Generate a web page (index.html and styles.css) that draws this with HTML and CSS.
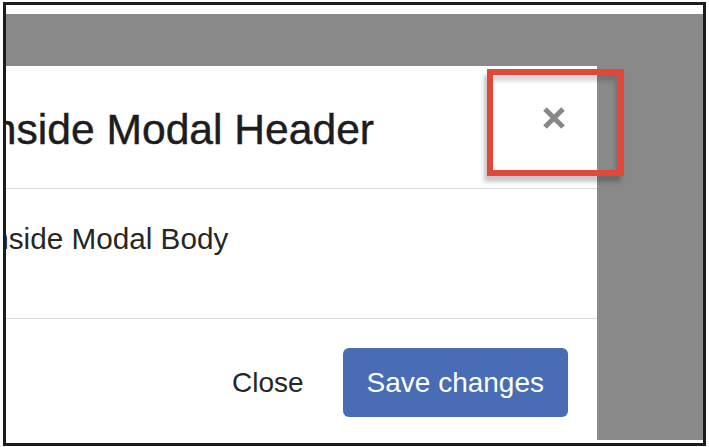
FILE: index.html
```html
<!DOCTYPE html>
<html lang="en">
<head>
<meta charset="utf-8">
<title>Modal close button</title>
<link rel="stylesheet" href="styles.css">
</head>
<body>
<div class="frame">
  <div class="backdrop">
    <div class="modal">
      <div class="modal-header">
        <h5 class="modal-title">Inside Modal Header</h5>
        <button class="close" type="button" aria-label="Close">
          <svg width="24" height="24" viewBox="0 0 24 24" aria-hidden="true">
            <path d="M3 3 L21 21 M21 3 L3 21" stroke="#878787" stroke-width="5" stroke-linecap="butt" fill="none"/>
          </svg>
        </button>
      </div>
      <div class="modal-body">
        <p class="body-text">Inside Modal Body</p>
      </div>
      <div class="modal-footer">
        <button class="btn btn-link" type="button">Close</button>
        <button class="btn btn-primary" type="button">Save changes</button>
      </div>
    </div>
  </div>
  <div class="highlight"></div>
</div>
</body>
</html>
```

FILE: styles.css
```css
* { box-sizing: border-box; }

html, body {
  margin: 0;
  padding: 0;
  background: #ffffff;
  font-family: "Liberation Sans", Arial, sans-serif;
}

.frame {
  position: relative;
  margin: 2px 0 0 3px;
  width: 703px;
  height: 444px;
  border: 3px solid #1c1c1c;
  background: #ffffff;
  padding: 9px 0 3px 0;
  display: flex;
  flex-direction: column;
}

.backdrop {
  flex: 1;
  background: #898989;
  overflow: hidden;
  padding-top: 52px;
}

.modal {
  width: 646px;
  margin-left: -55px;
  background: #ffffff;
  height: 100%;
}

.modal-header {
  display: flex;
  align-items: flex-start;
  justify-content: space-between;
  padding: 39px 32px 35px 32px;
  border-bottom: 1px solid #dcdcdc;
}

.modal-title {
  margin: 0 0 0 -2px;
  font-size: 42.6px;
  line-height: 48px;
  font-weight: 400;
  color: #1d1d1d;
  -webkit-text-stroke: 0.45px #1d1d1d;
}

.close {
  display: flex;
  padding: 0;
  margin: 1px -1px 0 0;
  border: 0;
  background: transparent;
}

.modal-body {
  padding: 29px 32px 58px 33px;
  border-bottom: 1px solid #dcdcdc;
}

.body-text {
  margin: 0;
  font-size: 29.7px;
  line-height: 42px;
  color: #262626;
}

.modal-footer {
  display: flex;
  justify-content: flex-end;
  align-items: center;
  gap: 15px;
  padding: 29px 29px 0 0;
}

.btn {
  font-family: "Liberation Sans", Arial, sans-serif;
  font-size: 28px;
  height: 69px;
  padding: 0 24px;
  border: 0;
  border-radius: 6px;
  background: transparent;
}

.btn-link {
  color: #262626;
}

.btn-primary {
  background: #486db5;
  color: #ffffff;
}

.highlight {
  position: absolute;
  left: 481px;
  top: 64px;
  width: 137px;
  height: 107px;
  border: 6px solid #e2483a;
  box-shadow: -3px 6px 4px rgba(0, 0, 0, 0.22), inset -3px 6px 4px rgba(0, 0, 0, 0.16);
}
```
